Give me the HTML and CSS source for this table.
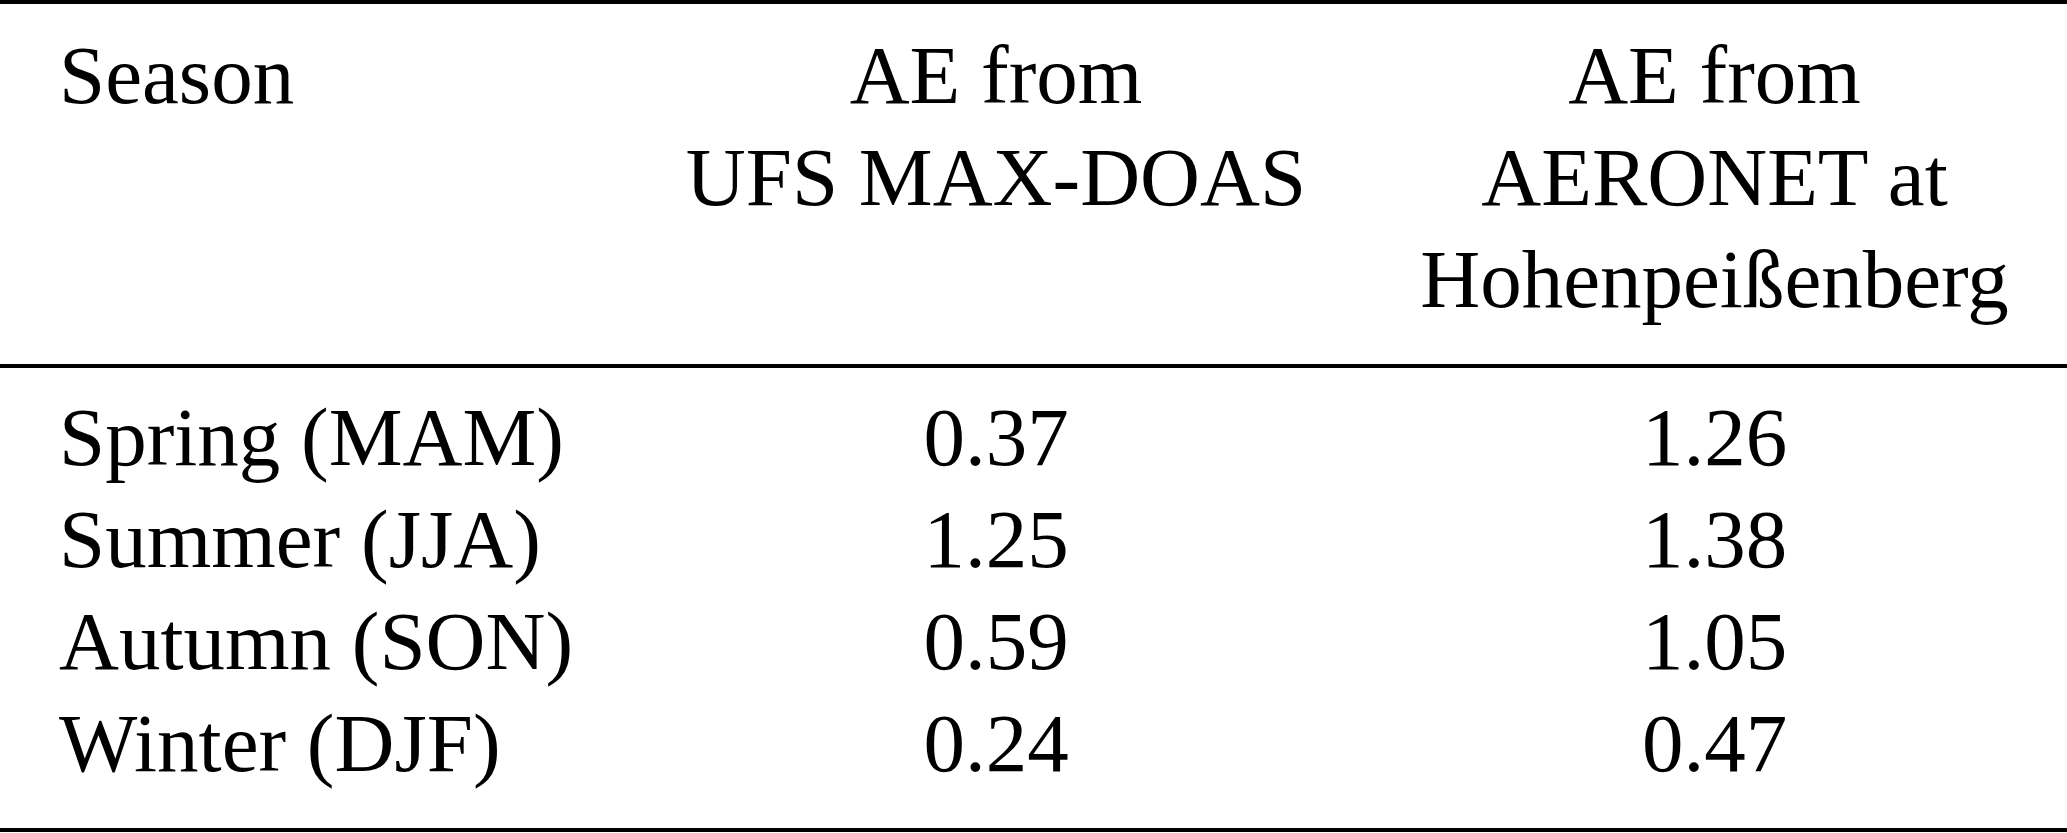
FILE: index.html
```html
<!DOCTYPE html>
<html lang="en">
<head>
    <meta charset="UTF-8" />
    <meta name="viewport" content="width=device-width, initial-scale=1.0" />
    <title>Seasonal AE comparison</title>
    <link rel="stylesheet" href="styles.css">
</head>
<body>
    <table class="ae-table">
        <colgroup>
            <col class="col-season">
            <col class="col-doas">
            <col class="col-aeronet">
        </colgroup>
        <thead>
            <tr>
                <th class="season">Season</th>
                <th>AE from<br>UFS MAX-DOAS</th>
                <th>AE from<br>AERONET at<br>Hohenpeißenberg</th>
            </tr>
        </thead>
        <tbody>
            <tr>
                <td class="season">Spring (MAM)</td>
                <td>0.37</td>
                <td>1.26</td>
            </tr>
            <tr>
                <td class="season">Summer (JJA)</td>
                <td>1.25</td>
                <td>1.38</td>
            </tr>
            <tr>
                <td class="season">Autumn (SON)</td>
                <td>0.59</td>
                <td>1.05</td>
            </tr>
            <tr>
                <td class="season">Winter (DJF)</td>
                <td>0.24</td>
                <td>0.47</td>
            </tr>
        </tbody>
    </table>
</body>
</html>
```

FILE: styles.css
```css
/* booktabs-like table */
body {
    margin: 0;
    padding: 0;
    background: #ffffff;
    color: #000000;
    font-family: 'Liberation Serif', 'Times New Roman', serif;
}
.ae-table {
    width: 100%;
    table-layout: fixed;
    border-collapse: separate;
    border-spacing: 0;
    font-size: 83px;
    line-height: 102px;
}
.col-season { width: 630px; }
.col-doas { width: 732px; }
.col-aeronet { width: auto; }
.ae-table th, .ae-table td {
    padding: 0 0;
    font-weight: normal;
    text-align: center;
    vertical-align: top;
    white-space: nowrap;
}
.ae-table .season {
    text-align: left;
    padding-left: 59px;
}
.ae-table thead th {
    border-top: 4px solid #000;
    border-bottom: 4px solid #000;
    padding-top: 20px;
    padding-bottom: 34px;
}
.ae-table tbody tr:first-child td {
    padding-top: 18px;
}
.ae-table tbody tr:last-child td {
    padding-bottom: 34px;
    border-bottom: 4px solid #000;
}
```
